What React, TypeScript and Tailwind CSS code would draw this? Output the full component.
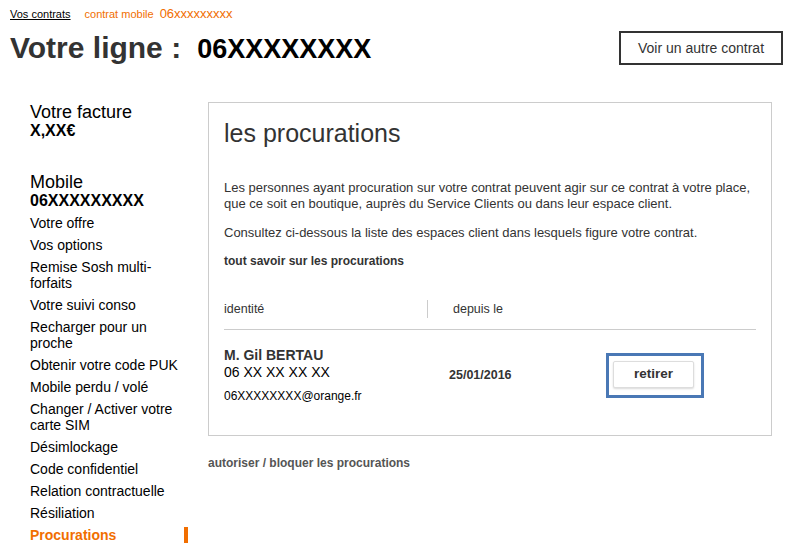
import React from "react";

const menu = [
  "Votre offre",
  "Vos options",
  "Remise Sosh multi-forfaits",
  "Votre suivi conso",
  "Recharger pour un proche",
  "Obtenir votre code PUK",
  "Mobile perdu / volé",
  "Changer / Activer votre carte SIM",
  "Désimlockage",
  "Code confidentiel",
  "Relation contractuelle",
  "Résiliation",
];

function Sidebar() {
  return (
    <aside className="w-[160px] shrink-0 pl-[30px] box-content">
      <div className="text-[18px] leading-[20px] text-black">Votre facture</div>
      <div className="text-[16px] leading-[18px] font-bold text-black">X,XX€</div>

      <div className="mt-[32px] text-[18px] leading-[20px] text-black">Mobile</div>
      <div className="text-[16px] leading-[18px] font-bold text-black">06XXXXXXXXX</div>

      <ul className="mt-[5px] flex flex-col gap-[6px] text-[14px] leading-[16px] text-black">
        {menu.map((m) => (
          <li key={m} className="w-[154px]">
            {m}
          </li>
        ))}
        <li className="flex items-center justify-between font-bold text-[#f16e00]">
          <span>Procurations</span>
          <span className="mr-[2px] h-[16px] w-[4px] bg-[#f16e00]" />
        </li>
      </ul>
    </aside>
  );
}

function Panel() {
  return (
    <div>
      <section className="border border-[#cccccc] px-[15px] pt-[16px] pb-[31px] text-[#333]">
        <h2 className="text-[25px] leading-[28px] text-[#333]">les procurations</h2>

        <p className="mt-[33px] text-[13px] leading-[16px]">
          Les personnes ayant procuration sur votre contrat peuvent agir sur ce contrat à votre place,
          que ce soit en boutique, auprès du Service Clients ou dans leur espace client.
        </p>
        <p className="mt-[13px] text-[13px] leading-[16px]">
          Consultez ci-dessous la liste des espaces client dans lesquels figure votre contrat.
        </p>
        <p className="mt-[12px] text-[12px] leading-[16px] font-bold">tout savoir sur les procurations</p>

        <div className="mt-[31px] flex items-center border-b border-[#cccccc] pb-[11px] text-[12.5px] leading-[18px]">
          <div className="w-[204px] border-r border-[#cccccc]">identité</div>
          <div className="pl-[25px]">depuis le</div>
        </div>

        <div className="mt-[17px] flex items-center">
          <div className="w-[225px]">
            <div className="text-[14px] leading-[17px] font-bold">M. Gil BERTAU</div>
            <div className="text-[14px] leading-[17px] text-black">06 XX XX XX XX</div>
            <div className="mt-[7px] text-[12px] leading-[16px] text-black">06XXXXXXXX@orange.fr</div>
          </div>
          <div className="w-[157px] text-[12.5px] font-bold">25/01/2016</div>
          <div className="border-[3px] border-[#4a78b5] pt-[5px] pl-[4px] pr-[7px] pb-[7px]">
            <button className="block h-[27px] w-[81px] rounded-[2px] border border-[#dddddd] bg-white text-[13.5px] font-bold text-[#333] shadow-[0_1px_2px_rgba(0,0,0,0.15)]">
              retirer
            </button>
          </div>
        </div>
      </section>

      <p className="mt-[19px] text-[12px] leading-[16px] font-bold text-[#555]">
        autoriser / bloquer les procurations
      </p>
    </div>
  );
}

export default function App() {
  return (
    <div className="h-[554px] w-[788px] overflow-hidden bg-white font-['Liberation_Sans',Arial,sans-serif]">
      <div className="flex items-baseline gap-[14px] pl-[10px] pt-[4px]">
        <span className="text-[11px] text-black underline">Vos contrats</span>
        <span className="flex items-baseline gap-[6px] text-[#f16e00]">
          <span className="text-[11px]">contrat mobile</span>
          <span className="text-[13px]">06xxxxxxxxx</span>
        </span>
      </div>

      <div className="mt-[7px] flex items-center justify-between pl-[10px] pr-[5px]">
        <h1 className="flex items-baseline gap-[16px]">
          <span className="text-[30px] leading-[34px] font-bold text-[#333]">Votre ligne :</span>
          <span className="text-[27px] leading-[34px] font-bold text-black">06XXXXXXXX</span>
        </h1>
        <button className="h-[34px] w-[164px] border-2 border-[#333] bg-white text-[14px] text-[#333]">
          Voir un autre contrat
        </button>
      </div>

      <div className="mt-[36px] flex gap-[18px] pr-[16px]">
        <Sidebar />
        <div className="flex-1">
          <Panel />
        </div>
      </div>
    </div>
  );
}
